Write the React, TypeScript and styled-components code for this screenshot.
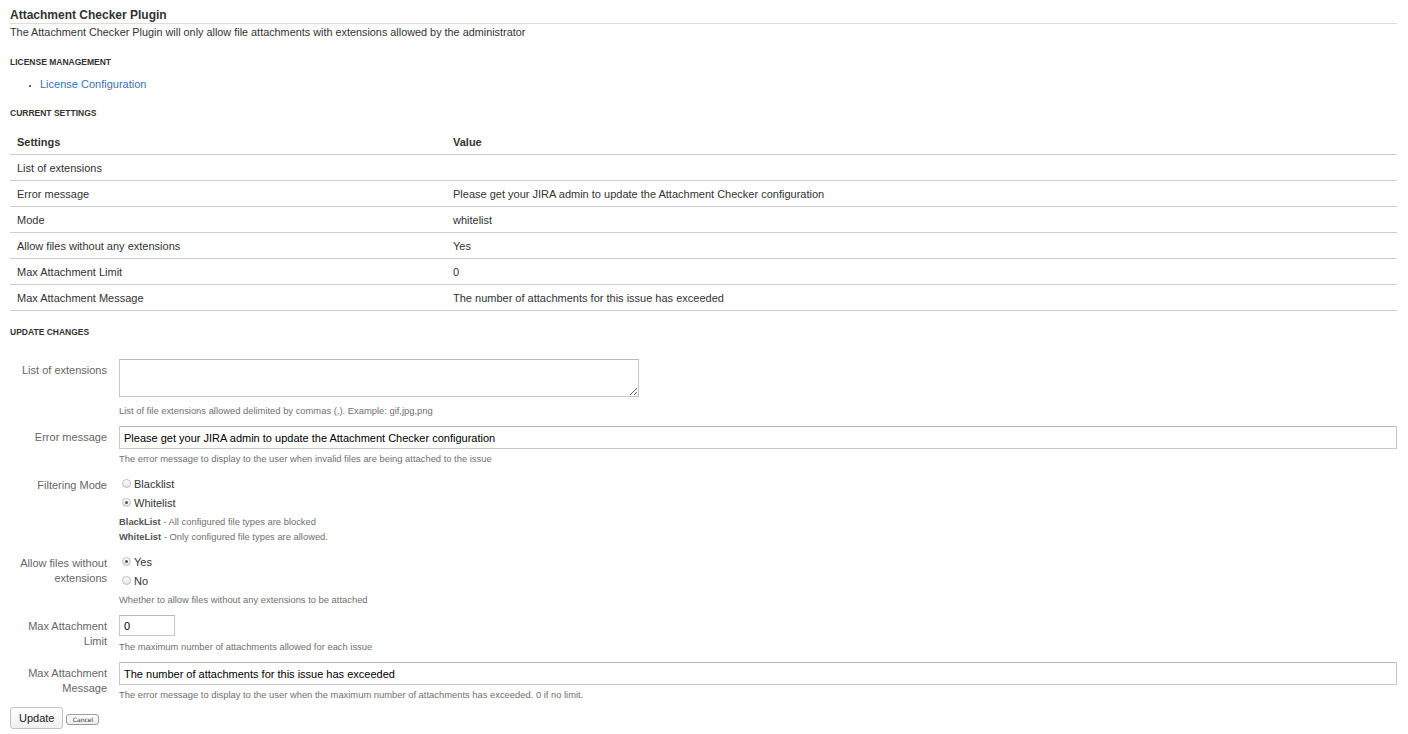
import React from 'react';
import styled, { createGlobalStyle } from 'styled-components';

const GlobalStyle = createGlobalStyle`
    body {
        margin: 0;
        background: #fff;
        color: #333;
        font-family: "Liberation Sans", Arial, sans-serif;
        font-size: 11px;
    }
`;

const Page = styled.div`
    padding: 7px 11px 8px 10px;
`;

const Title = styled.h2`
    margin: 0;
    font-size: 12px;
    line-height: 16px;
    font-weight: bold;
    color: #333;
    border-bottom: 1px solid #ddd;
`;

const Intro = styled.p`
    margin: 0;
    line-height: 16px;
    font-size: 10.85px;
    color: #333;
`;

const SectionHeading = styled.h4<{ $top: number }>`
    margin: ${(p) => p.$top}px 0 0;
    font-size: 8.5px;
    line-height: 12px;
    font-weight: bold;
    text-transform: uppercase;
    color: #333;
`;

const LinkList = styled.ul`
    margin: 8px 0 0;
    padding: 0 0 0 30px;
    line-height: 16px;
    li::marker {
        font-size: 8px;
    }
`;

const Link = styled.a`
    color: #3b73af;
    text-decoration: none;
`;

const Table = styled.table`
    margin-top: 10px;
    width: 100%;
    border-collapse: collapse;
    table-layout: fixed;
`;

const HeadCell = styled.th<{ $width?: number }>`
    text-align: left;
    font-weight: bold;
    padding: 0 7px;
    height: 25px;
    border-bottom: 1px solid #ccc;
    width: ${(p) => (p.$width ? `${p.$width}px` : 'auto')};
`;

const Cell = styled.td`
    padding: 0 7px;
    height: 25px;
    border-bottom: 1px solid #ccc;
`;

const Form = styled.form`
    margin-top: 21px;
    display: flex;
    flex-direction: column;
    gap: 8px;
`;

const FieldGroup = styled.div`
    display: grid;
    grid-template-columns: 97px 1fr;
    column-gap: 12px;
`;

const Label = styled.label`
    text-align: right;
    color: #666;
    line-height: 15px;
    padding-top: 3.5px;
`;

const FieldBody = styled.div`
    display: flex;
    flex-direction: column;
    align-items: flex-start;
`;

const TextArea = styled.textarea`
    box-sizing: border-box;
    width: 520px;
    height: 38px;
    border: 1px solid #c8c8c8;
    border-top-color: #b8b8b8;
    margin: 0 0 4px;
    padding: 3px 4px;
    font-family: inherit;
    font-size: 11px;
    display: block;
`;

const TextInput = styled.input<{ $width?: number; $height?: number }>`
    box-sizing: border-box;
    width: ${(p) => (p.$width ? `${p.$width}px` : '100%')};
    height: ${(p) => p.$height ?? 23}px;
    border: 1px solid #c8c8c8;
    border-top-color: #b8b8b8;
    margin: 0;
    padding: 0 4px;
    font-family: inherit;
    font-size: 11px;
    color: #000;
    outline: none;
`;

const Desc = styled.div<{ $gap?: number }>`
    margin-top: ${(p) => p.$gap ?? 3}px;
    font-size: 9.4px;
    line-height: 14px;
    color: #707070;
    b {
        color: #555;
    }
`;

const ModeDesc = styled(Desc)`
    margin-top: 0;
    line-height: 15px;
    &:first-of-type {
        margin-top: 2px;
    }
`;

const RadioRow = styled.label`
    display: flex;
    align-items: center;
    gap: 3px;
    height: 19px;
    padding-left: 3px;
    color: #333;
`;

const RadioDot = styled.span<{ $checked?: boolean }>`
    box-sizing: border-box;
    flex: none;
    width: 9px;
    height: 9px;
    border-radius: 50%;
    border: 1px solid #bdbdbd;
    background: linear-gradient(#fdfdfd, #e6e6e6);
    display: flex;
    align-items: center;
    justify-content: center;
    &::after {
        content: '';
        display: ${(p) => (p.$checked ? 'block' : 'none')};
        width: 3px;
        height: 3px;
        border-radius: 50%;
        background: #555;
    }
`;

const Buttons = styled.div`
    display: flex;
    align-items: center;
    gap: 3px;
    margin-top: -3px;
`;

const UpdateButton = styled.button`
    height: 22px;
    padding: 0 8px;
    font-family: inherit;
    font-size: 11px;
    color: #222;
    border: 1px solid #c2c2c2;
    border-radius: 3px;
    background: linear-gradient(#fff, #f0f0f0);
`;

const CancelButton = styled.button`
    height: 11px;
    width: 33px;
    padding: 0;
    margin-top: 2px;
    font-family: "DejaVu Sans", sans-serif;
    font-size: 6px;
    color: #333;
    border: 1px solid #9c9c9c;
    border-radius: 3px;
    background: linear-gradient(#fff, #ececec);
`;

const settings = [
    ['List of extensions', ''],
    ['Error message', 'Please get your JIRA admin to update the Attachment Checker configuration'],
    ['Mode', 'whitelist'],
    ['Allow files without any extensions', 'Yes'],
    ['Max Attachment Limit', '0'],
    ['Max Attachment Message', 'The number of attachments for this issue has exceeded'],
];

const Radio = ({ label, checked }: { label: string; checked?: boolean }) => (
    <RadioRow>
        <RadioDot $checked={checked} />
        {label}
    </RadioRow>
);

export default function App() {
    return (
        <Page>
            <GlobalStyle />
            <Title>Attachment Checker Plugin</Title>
            <Intro>The Attachment Checker Plugin will only allow file attachments with extensions allowed by the administrator</Intro>

            <SectionHeading $top={16}>License Management</SectionHeading>
            <LinkList>
                <li>
                    <Link href="#">License Configuration</Link>
                </li>
            </LinkList>

            <SectionHeading $top={15}>Current Settings</SectionHeading>
            <Table>
                <thead>
                    <tr>
                        <HeadCell $width={422}>Settings</HeadCell>
                        <HeadCell>Value</HeadCell>
                    </tr>
                </thead>
                <tbody>
                    {settings.map(([name, value]) => (
                        <tr key={name}>
                            <Cell>{name}</Cell>
                            <Cell>{value}</Cell>
                        </tr>
                    ))}
                </tbody>
            </Table>

            <SectionHeading $top={15}>Update Changes</SectionHeading>
            <Form onSubmit={(e) => e.preventDefault()}>
                <FieldGroup>
                    <Label>List of extensions</Label>
                    <FieldBody>
                        <TextArea />
                        <Desc>List of file extensions allowed delimited by commas (,). Example: gif,jpg,png</Desc>
                    </FieldBody>
                </FieldGroup>
                <FieldGroup>
                    <Label>Error message</Label>
                    <FieldBody>
                        <TextInput defaultValue="Please get your JIRA admin to update the Attachment Checker configuration" />
                        <Desc>The error message to display to the user when invalid files are being attached to the issue</Desc>
                    </FieldBody>
                </FieldGroup>
                <FieldGroup>
                    <Label>Filtering Mode</Label>
                    <FieldBody>
                        <Radio label="Blacklist" />
                        <Radio label="Whitelist" checked />
                        <ModeDesc>
                            <b>BlackList</b> - All configured file types are blocked
                        </ModeDesc>
                        <ModeDesc>
                            <b>WhiteList</b> - Only configured file types are allowed.
                        </ModeDesc>
                    </FieldBody>
                </FieldGroup>
                <FieldGroup>
                    <Label>Allow files without extensions</Label>
                    <FieldBody>
                        <Radio label="Yes" checked />
                        <Radio label="No" />
                        <Desc>Whether to allow files without any extensions to be attached</Desc>
                    </FieldBody>
                </FieldGroup>
                <FieldGroup>
                    <Label>Max Attachment Limit</Label>
                    <FieldBody>
                        <TextInput $width={56} $height={21} defaultValue="0" />
                        <Desc $gap={4}>The maximum number of attachments allowed for each issue</Desc>
                    </FieldBody>
                </FieldGroup>
                <FieldGroup>
                    <Label>Max Attachment Message</Label>
                    <FieldBody>
                        <TextInput defaultValue="The number of attachments for this issue has exceeded" />
                        <Desc>The error message to display to the user when the maximum number of attachments has exceeded. 0 if no limit.</Desc>
                    </FieldBody>
                </FieldGroup>
                <Buttons>
                    <UpdateButton type="submit">Update</UpdateButton>
                    <CancelButton type="button">Cancel</CancelButton>
                </Buttons>
            </Form>
        </Page>
    );
}
